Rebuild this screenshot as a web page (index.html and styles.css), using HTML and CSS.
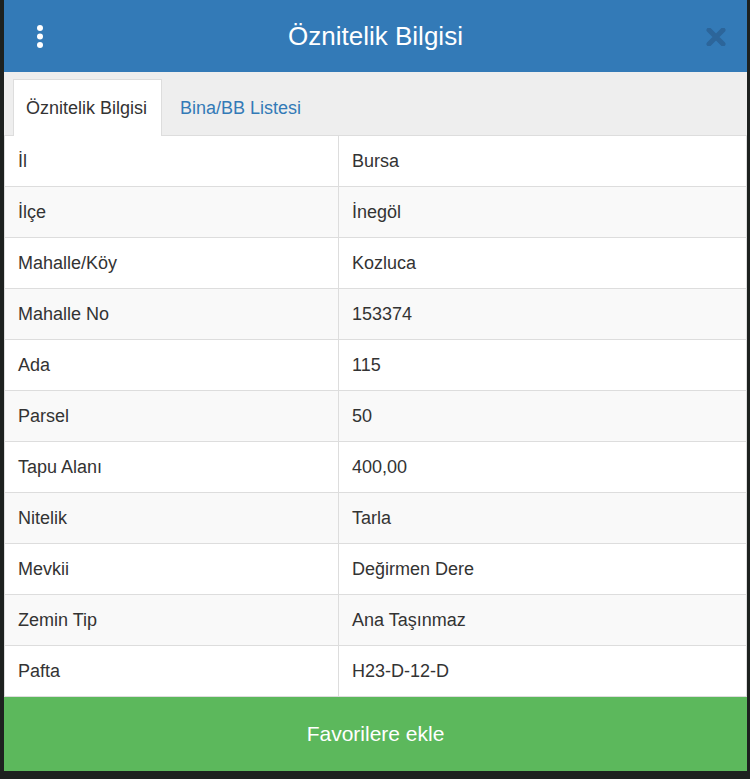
FILE: index.html
```html
<!DOCTYPE html>
<html lang="tr">
  <head>
    <meta charset="UTF-8" />
    <meta name="viewport" content="width=device-width, initial-scale=1.0" />
    <title>Öznitelik Bilgisi</title>
    <link rel="stylesheet" href="styles.css">
  </head>
  <body>
    <div class="modal">
      <div class="modal-header">
        <span class="menu-icon">
          <svg width="12" height="26" viewBox="0 0 12 26">
            <circle cx="6" cy="4" r="3" fill="#fff" />
            <circle cx="6" cy="12.5" r="3" fill="#fff" />
            <circle cx="6" cy="21" r="3" fill="#fff" />
          </svg>
        </span>
        <h2>Öznitelik Bilgisi</h2>
        <span class="close-icon">
          <svg width="20" height="18" viewBox="0 0 20 18">
            <path d="M3 2 L17 16 M17 2 L3 16" stroke="#2c659a" stroke-width="5" stroke-linecap="round" />
          </svg>
        </span>
      </div>

      <ul class="tabs">
        <li class="active">Öznitelik Bilgisi</li>
        <li><a href="#">Bina/BB Listesi</a></li>
      </ul>

      <table class="info">
        <tbody>
          <tr><td>İl</td><td>Bursa</td></tr>
          <tr><td>İlçe</td><td>İnegöl</td></tr>
          <tr><td>Mahalle/Köy</td><td>Kozluca</td></tr>
          <tr><td>Mahalle No</td><td>153374</td></tr>
          <tr><td>Ada</td><td>115</td></tr>
          <tr><td>Parsel</td><td>50</td></tr>
          <tr><td>Tapu Alanı</td><td>400,00</td></tr>
          <tr><td>Nitelik</td><td>Tarla</td></tr>
          <tr><td>Mevkii</td><td>Değirmen Dere</td></tr>
          <tr><td>Zemin Tip</td><td>Ana Taşınmaz</td></tr>
          <tr><td>Pafta</td><td>H23-D-12-D</td></tr>
        </tbody>
      </table>

      <button class="fav-btn">Favorilere ekle</button>
    </div>
  </body>
</html>
```

FILE: styles.css
```css
body {
  margin: 0;
  background-color: #1d211f;
  font-family: "Liberation Sans", Arial, sans-serif;
  color: #333;
}
.modal {
  margin-left: 4px;
  width: 743px;
  background: white;
}
.modal-header {
  height: 72px;
  background: #337ab7;
  display: grid;
  grid-template-columns: 80px 1fr 80px;
  align-items: center;
}
.modal-header h2 {
  margin: 0;
  text-align: center;
  color: white;
  font-size: 26px;
  font-weight: normal;
}
.menu-icon {
  display: flex;
  padding-left: 30px;
  padding-top: 1px;
}
.close-icon {
  display: flex;
  justify-content: flex-end;
  padding-right: 21px;
  padding-top: 1px;
}
.tabs {
  box-sizing: border-box;
  height: 64px;
  list-style: none;
  margin: 0;
  padding: 7px 0 0 9px;
  background: #eee;
  display: flex;
  align-items: flex-start;
  border-bottom: 1px solid #ddd;
}
.tabs li {
  box-sizing: border-box;
  height: 57px;
  font-size: 18px;
  line-height: 26px;
  padding: 15px 14px 0 14px;
  margin-right: 3px;
  border: 1px solid transparent;
  border-bottom: none;
}
.tabs li.active {
  background: white;
  border-color: #ddd;
  padding-left: 12px;
}
.tabs a {
  color: #337ab7;
  text-decoration: none;
}
.info {
  width: 100%;
  border-collapse: collapse;
  border-left: 1px solid #ddd;
  border-right: 1px solid #ddd;
}
.info td {
  box-sizing: border-box;
  height: 50.9px;
  font-size: 18px;
  line-height: 26px;
  padding: 12px 13px;
  border-bottom: 1px solid #ddd;
}
.info td:first-child {
  width: 334px;
  border-right: 1px solid #ddd;
}
.info tr:nth-child(even) {
  background: #f9f9f9;
}
.fav-btn {
  display: block;
  width: 100%;
  height: 74px;
  border: none;
  background: #5cb85c;
  color: white;
  font-family: "Liberation Sans", Arial, sans-serif;
  font-size: 21px;
  cursor: pointer;
}
```
